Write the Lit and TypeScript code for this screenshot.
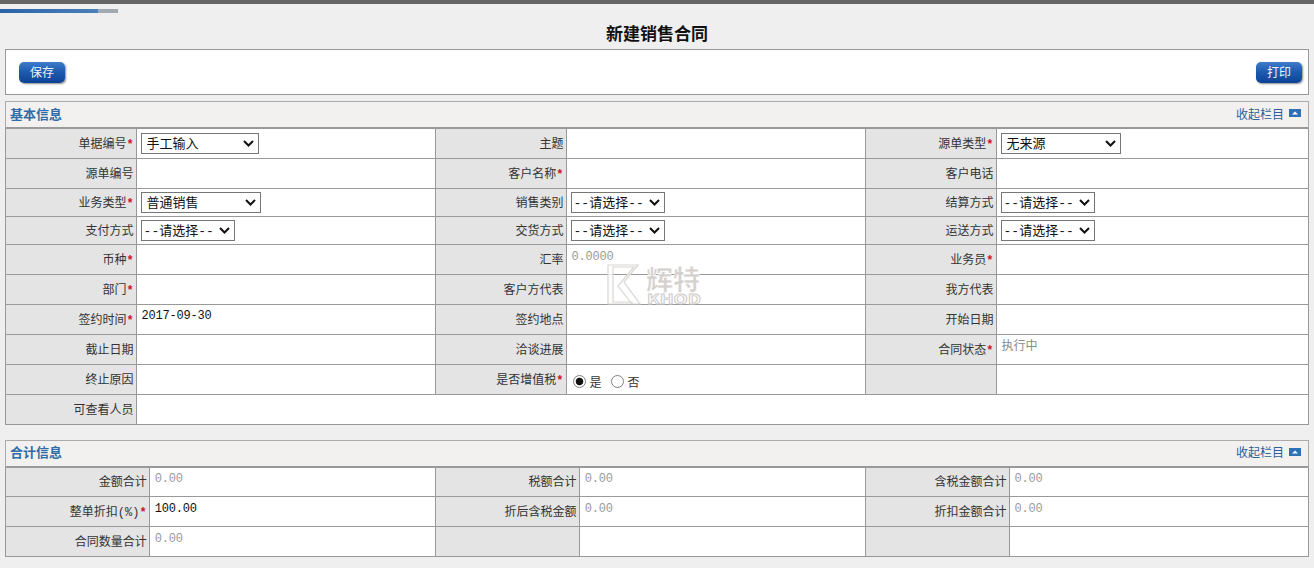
import { LitElement, html, css, nothing } from "lit";
import { customElement } from "lit/decorators.js";

type Cell =
  | { l: string; req?: boolean }
  | { sel: string; w: string }
  | { val: string; dark?: boolean; sans?: boolean }
  | { radio: true }
  | { empty: true; span?: number };

const L = (l: string, req = false): Cell => ({ l, req });
const E = (span?: number): Cell => ({ empty: true, span });
const S = (sel: string, w: string): Cell => ({ sel, w });
const V = (val: string, dark = false, sans = false): Cell => ({ val, dark, sans });
const PICK = "--请选择--";

const basicRows: { h: string; cells: Cell[] }[] = [
  { h: "r30", cells: [L("单据编号", true), S("手工输入", "w118"), L("主题"), E(), L("源单类型", true), S("无来源", "w120")] },
  { h: "r30", cells: [L("源单编号"), E(), L("客户名称", true), E(), L("客户电话"), E()] },
  { h: "r28", cells: [L("业务类型", true), S("普通销售", "w120"), L("销售类别"), S(PICK, "w94"), L("结算方式"), S(PICK, "w94")] },
  { h: "r28", cells: [L("支付方式"), S(PICK, "w94"), L("交货方式"), S(PICK, "w94"), L("运送方式"), S(PICK, "w94")] },
  { h: "r30", cells: [L("币种", true), E(), L("汇率"), V("0.0000"), L("业务员", true), E()] },
  { h: "r30", cells: [L("部门", true), E(), L("客户方代表"), E(), L("我方代表"), E()] },
  { h: "r30", cells: [L("签约时间", true), V("2017-09-30", true), L("签约地点"), E(), L("开始日期"), E()] },
  { h: "r30", cells: [L("截止日期"), E(), L("洽谈进展"), E(), L("合同状态", true), V("执行中", false, true)] },
  { h: "r30", cells: [L("终止原因"), E(), L("是否增值税", true), { radio: true }, L(""), E()] },
  { h: "r30", cells: [L("可查看人员"), E(5)] },
];

const totalRows: { h: string; cells: Cell[] }[] = [
  { h: "r30", cells: [L("金额合计"), V("0.00"), L("税额合计"), V("0.00"), L("含税金额合计"), V("0.00")] },
  { h: "r30", cells: [L("整单折扣(%)", true), V("100.00", true), L("折后含税金额"), V("0.00"), L("折扣金额合计"), V("0.00")] },
  { h: "r30", cells: [L("合同数量合计"), V("0.00"), L(""), E(), L(""), E()] },
];

@customElement("app-root")
export class AppRoot extends LitElement {
  static styles = css`
    :host {
      display: block;
      width: 1314px;
      height: 568px;
      overflow: hidden;
      background: #efefef;
      font-family: "Noto Sans CJK SC", "Liberation Sans", sans-serif;
      font-size: 12px;
      color: #333;
      position: relative;
    }
    .topbar { height: 4px; background: #666; }
    .progress { display: flex; width: 118px; height: 4px; margin-top: 5px; background: #a3a9b0; }
    .progress i { display: block; width: 98px; background: linear-gradient(90deg, #2a63a8, #4a7fb8); }
    h1 {
      margin: 0;
      height: 36px;
      line-height: 40px;
      text-align: center;
      font-size: 17px;
      font-weight: 700;
      color: #111;
    }
    .toolbar {
      display: flex;
      justify-content: space-between;
      align-items: center;
      box-sizing: border-box;
      height: 46px;
      margin: 0 5px;
      padding: 0 6px 0 13px;
      background: #fff;
      border: 1px solid #999;
    }
    .btn {
      box-sizing: border-box;
      width: 46px;
      height: 21px;
      border: 0;
      border-radius: 5px;
      padding: 0 0 1px;
      font: inherit;
      font-size: 12px;
      line-height: 18px;
      color: #eef4fb;
      background: linear-gradient(#3f7cc9, #1e5cb0 45%, #0d4296);
      box-shadow: 1px 1px 2px rgba(60, 60, 60, 0.6);
    }
    .section { margin: 6px 5px 0; }
    .section + .section { margin-top: 15px; }
    .head {
      display: flex;
      justify-content: space-between;
      align-items: center;
      box-sizing: border-box;
      height: 28px;
      padding: 0 7px 3px 4px;
      background: #f3f1ef;
      border: 1px solid #aaa;
      border-bottom: 2px solid #999;
    }
    .head b { font-size: 13px; color: #2f6ba8; font-weight: 700; }
    .toggle { display: flex; align-items: center; gap: 5px; color: #2c5f97; }
    .toggle svg { display: block; }
    table {
      width: 1304px;
      table-layout: fixed;
      border-collapse: collapse;
      background: #fff;
    }
    td {
      box-sizing: border-box;
      border: 1px solid #999;
      border-top: 0;
      padding: 0;
      vertical-align: middle;
      line-height: 16px;
    }
    .r30 td { height: 30px; }
    .r28 td { height: 28px; }
    tr:first-of-type td { height: 29px; }
    .main .lab { width: 130px; }
    .main .val { width: 298px; }
    .main .last { width: 311px; }
    .sum .lab { width: 143px; }
    .sum .val { width: 285px; }
    .sum .last { width: 298px; }
    td.label {
      background: #e4e4e4;
      text-align: right;
      padding: 3px 2px 0 0;
      color: #333;
      white-space: nowrap;
      font-family: "Liberation Mono", "Noto Sans CJK SC", sans-serif;
    }
    .req { color: #d0112b; font-weight: 700; }
    td.pad { padding-left: 4px; }
    select {
      display: block;
      box-sizing: border-box;
      height: 21px;
      appearance: none;
      font-family: "Liberation Mono", "Noto Sans CJK SC", monospace;
      font-size: 13px;
      line-height: 19px;
      color: #111;
      border: 1px solid #767676;
      border-radius: 0;
      padding: 1px 0 0 5px;
      background: #fff url("data:image/svg+xml,%3Csvg xmlns='http://www.w3.org/2000/svg' width='11' height='7'%3E%3Cpath d='M1 1 L5.5 5.5 L10 1' fill='none' stroke='%23111' stroke-width='2'/%3E%3C/svg%3E") no-repeat right 4px center;
    }
    .w118 { width: 118px; }
    .w120 { width: 120px; }
    .w94 { width: 94px; padding-left: 2px; }
    .value {
      display: block;
      padding: 0 0 4px 5px;
      font-family: "Liberation Mono", monospace;
      font-size: 12px;
      letter-spacing: -0.2px;
      color: #999;
      line-height: 14px;
    }
    .sum .value { padding-bottom: 6px; }
    .value.dark { color: #111; padding-bottom: 6px; }
    .value.sans { font-family: inherit; letter-spacing: 0; color: #888; padding-bottom: 9px; }
    .radios { display: flex; align-items: center; padding: 5px 0 0 6px; color: #333; }
    .radios input {
      appearance: none;
      box-sizing: border-box;
      margin: 0 4px 0 0;
      width: 13px;
      height: 13px;
      border: 1px solid #808080;
      border-radius: 50%;
      background: #fff;
    }
    .radios input:checked { background: radial-gradient(circle, #111 0 3.4px, #fff 4.2px); }
    .radios label { display: flex; align-items: center; margin-right: 9px; }
    .mark {
      position: absolute;
      left: 604px;
      top: 256px;
      pointer-events: none;
    }
    .mark text { font-family: "Noto Sans CJK SC", sans-serif; font-weight: 700; }
  `;

  private cell(c: Cell, cls: string) {
    if ("l" in c) {
      return html`<td class="label ${cls}">${c.l}${c.req ? html`<span class="req">*</span>` : nothing}</td>`;
    }
    if ("sel" in c) {
      return html`<td class="pad ${cls}"><select class=${c.w}><option>${c.sel}</option></select></td>`;
    }
    if ("val" in c) {
      return html`<td class=${cls}><span class="value ${c.dark ? "dark" : ""} ${c.sans ? "sans" : ""}">${c.val}</span></td>`;
    }
    if ("radio" in c) {
      return html`<td class=${cls}><div class="radios">
        <label><input type="radio" name="vat" checked />是</label>
        <label><input type="radio" name="vat" />否</label>
      </div></td>`;
    }
    return html`<td class=${cls} colspan=${c.span ?? 1}></td>`;
  }

  private table(rows: { h: string; cells: Cell[] }[], kind: string) {
    const classes = ["lab", "val", "lab", "val", "lab", "last"];
    return html`<table class=${kind}>
      <colgroup>${classes.map((k) => html`<col class=${k} />`)}</colgroup>
      ${rows.map(
        (r) => html`<tr class=${r.h}>${r.cells.map((c, i) => this.cell(c, classes[i]))}</tr>`
      )}
    </table>`;
  }

  private head(title: string) {
    return html`<div class="head">
      <b>${title}</b>
      <span class="toggle">收起栏目
        <svg width="12" height="8" viewBox="0 0 12 8">
          <rect width="12" height="8" fill="#2f70b4" />
          <path d="M3 5.5 L6 2.5 L9 5.5 Z" fill="#fff" />
        </svg>
      </span>
    </div>`;
  }

  render() {
    return html`
      <div class="topbar"></div>
      <div class="progress"><i></i></div>
      <h1>新建销售合同</h1>
      <div class="toolbar">
        <button class="btn">保存</button>
        <button class="btn">打印</button>
      </div>
      <div class="section">${this.head("基本信息")}${this.table(basicRows, "main")}</div>
      <div class="section">${this.head("合计信息")}${this.table(totalRows, "sum")}</div>
      <svg class="mark" width="104" height="56" viewBox="0 -6 104 56">
        <path d="M4 3 H34 L20 20 L36 42 H28 L14 24 L30 5 H9 V40 H28 V42 H4 Z" fill="#fff" fill-opacity="0.7" stroke="#d9d6d4" stroke-width="1.2" />
        <text x="42" y="28" font-size="27" fill="#d4d0ce" stroke="#fff" stroke-width="0.4">辉特</text>
        <text x="43" y="42" font-size="13" fill="#fff" stroke="#cfcbc9" stroke-width="0.8" textLength="54" lengthAdjust="spacingAndGlyphs">KHOD</text>
      </svg>
    `;
  }
}
